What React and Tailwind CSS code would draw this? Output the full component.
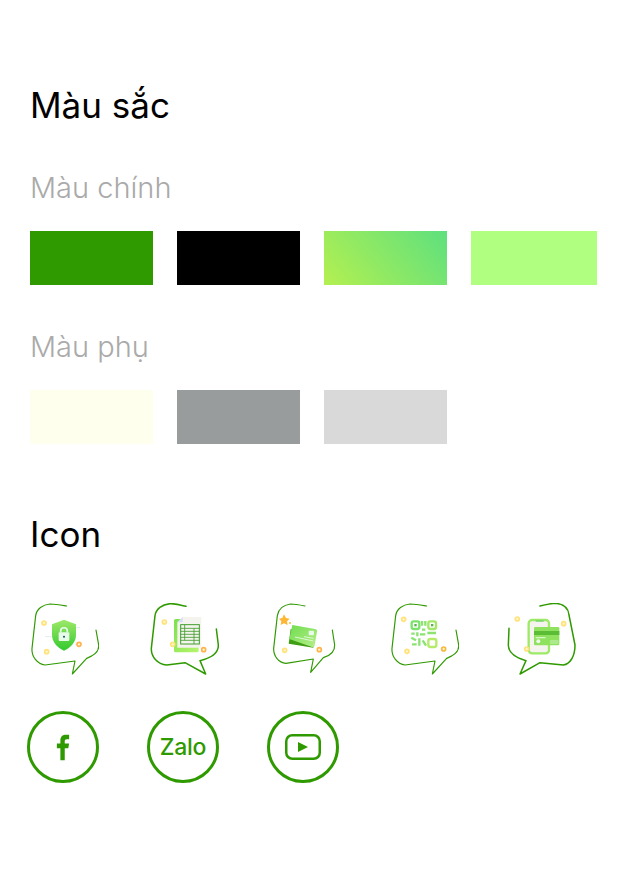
const font = { fontFamily: '"Inter", "Noto Sans", sans-serif' };

function Bubble({ d, box = "21 24 216 216", children, sw = 3.5 }) {
  return (
    <svg width="72" height="72" viewBox={box} fill="none" className="shrink-0">
      <path d={d} stroke="#2f9a00" strokeWidth={sw} strokeLinecap="round" strokeLinejoin="round" />
      {children}
    </svg>
  );
}

function Dot({ x, y, c = "#ffe27a", r = 6, w = 5 }) {
  return <circle cx={x} cy={y} r={r} fill="#fff6cf" stroke={c} strokeWidth={w} />;
}

function ShieldIcon() {
  return (
    <Bubble d="M140 33C122 30 105 27 90 27C68 29 50 42 47 62L36 160C34 185 52 207 75 210L165 198L157 237L200 190C222 182 238 170 236 150L228 105">
      <defs>
        <linearGradient id="sh" x1="0" y1="0" x2="0" y2="1">
          <stop offset="0" stopColor="#9fe86a" />
          <stop offset="1" stopColor="#33c92f" />
        </linearGradient>
      </defs>
      <path d="M162 98H180M75 125H95M165 148H172" stroke="#e6eaf5" strokeWidth="3" />
      <path d="M132 74L168 88V120C168 142 150 160 132 167C114 160 96 142 96 120V88Z" fill="url(#sh)" />
      <path d="M122 112V108C122 95 142 95 142 108V112" stroke="#e8fbe8" strokeWidth="5" />
      <rect x="116" y="112" width="32" height="26" rx="3" fill="#e8fbe8" />
      <circle cx="132" cy="125" r="3" fill="#174a6a" />
      <Dot x={72} y={84} />
      <Dot x={80} y={170} />
      <Dot x={177} y={148} c="#ffb24d" />
    </Bubble>
  );
}

function SheetIcon() {
  return (
    <Bubble sw={4.500} d="M138 34C120 30 105 25 90 26C66 28 48 42 45 62L34 160C33 185 52 208 80 210L135 203L197 237L180 197C210 190 236 175 235 150L229 102">
      <defs>
        <linearGradient id="sg" x1="0" y1="0" x2="1" y2="1">
          <stop offset="0" stopColor="#7ae04e" />
          <stop offset="1" stopColor="#b8f56e" />
        </linearGradient>
      </defs>
      <rect x="102" y="72" width="74" height="100" rx="5" fill="url(#sg)" />
      <path d="M128 66H184V158H112V82Z" fill="#f5f3ee" />
      <path d="M128 66V82H112Z" fill="#d5def5" />
      <rect x="122" y="89" width="56" height="58" fill="none" stroke="#3f9e2a" strokeWidth="3" />
      <path d="M122 100H178M122 109H178M122 118H178M122 127H178M122 136H178M134 89V136M162 100V147" stroke="#3f9e2a" strokeWidth="2.500" />
      <Dot x={73} y={81} />
      <Dot x={98} y={148} />
      <Dot x={191} y={164} c="#ffb24d" />
    </Bubble>
  );
}

function CardIcon() {
  return (
    <Bubble d="M135 33C120 30 105 27 92 27C70 30 55 42 52 62L41 160C40 182 55 204 78 205L160 192L152 232L190 188C210 182 225 172 224 150L217 105">
      <defs>
        <linearGradient id="cg" x1="0" y1="0" x2="1" y2="1">
          <stop offset="0" stopColor="#6fdc4e" />
          <stop offset="1" stopColor="#b6ef8a" />
        </linearGradient>
      </defs>
      <path d="M92 102L166 118L160 158L86 146Z" fill="#3f9e14" />
      <path d="M97 90L165 102C170 103 172 106 171 110L164 150C163 155 160 157 156 156L88 132Z" fill="url(#cg)" />
      <rect x="146" y="107" width="16" height="14" rx="3" fill="#e8fbe8" />
      <path d="M132 125L160 130M105 126L160 138" stroke="#e8fbe8" strokeWidth="2.500" />
      <path d="M72 58L78 69L89 71L81 79L83 90L72 85L62 90L64 79L57 71L67 69Z" fill="#ffb733" />
      <circle cx="90" cy="84" r="3" fill="#ffb733" />
      <Dot x={74} y={166} />
      <Dot x={178} y={164} c="#ffb24d" />
    </Bubble>
  );
}

function QrIcon() {
  return (
    <Bubble d="M140 33C122 30 105 27 90 27C68 29 50 42 47 62L36 160C34 185 52 207 75 210L165 198L157 237L200 190C222 182 238 170 236 150L228 105">
      <rect x="95" y="79" width="23" height="23" rx="6" stroke="#7be36a" strokeWidth="7" />
      <rect x="145" y="79" width="23" height="23" rx="6" stroke="#a4e86a" strokeWidth="7" />
      <rect x="145" y="132" width="24" height="24" rx="6" stroke="#b4ec6a" strokeWidth="7" />
      <rect x="103" y="87" width="7" height="7" fill="#5bb04a" />
      <rect x="153" y="87" width="7" height="7" fill="#5bb04a" />
      <path d="M126 78V92M136 78V92M126 104H136M94 116H104M112 112V124M94 128L108 136M120 118H136M142 114H168M96 148H110M118 130V152M128 136L138 152" stroke="#8be372" strokeWidth="7" />
      <Dot x={71} y={73} />
      <Dot x={81} y={169} />
      <Dot x={191} y={162} c="#f5b83a" />
    </Bubble>
  );
}

function PhoneIcon() {
  return (
    <Bubble sw={4.500} box="36 24 216 216" d="M135 33C155 28 170 25 182 25C205 27 220 38 222 60L240 150C240 185 225 207 205 210L135 203L75 237L93 197C62 188 40 175 40 150L42 100">
      <rect x="101" y="75" width="61" height="100" rx="10" fill="#f5f3ee" stroke="#9dea66" strokeWidth="7" />
      <path d="M122 78H146" stroke="#6fd36a" strokeWidth="4" />
      <rect x="117" y="96" width="76" height="55" rx="4" fill="#8ee25e" />
      <rect x="117" y="108" width="76" height="12" fill="#5bbd36" />
      <rect x="122" y="126" width="30" height="4" fill="#d8f7c6" />
      <circle cx="130" cy="139" r="6" fill="#e8fbe8" />
      <path d="M165 138H190M165 144H190" stroke="#e8fbe8" strokeWidth="2" />
      <Dot x={67} y={72} />
      <Dot x={206} y={86} />
      <Dot x={95} y={162} />
    </Bubble>
  );
}

function Circle({ children }) {
  return (
    <div className="w-[72px] h-[72px] shrink-0 rounded-full border-[3px] border-[#2f9a00] flex items-center justify-center text-[#2f9a00]">
      {children}
    </div>
  );
}

function Swatch({ className }) {
  return <div className={`h-[54px] ${className}`} />;
}

export default function App() {
  return (
    <div style={font} className="w-[636px] h-[879px] bg-white pl-[30px] pt-[84px]">
      <h2 className="text-[35px] leading-[42px] text-black">Màu sắc</h2>
      <h3 className="mt-[42px] text-[29px] font-light leading-[40px] text-[#aaaaaa]">Màu chính</h3>
      <div className="mt-[23px] flex gap-[24px]">
        <Swatch className="w-[123px] bg-[#2f9a00]" />
        <Swatch className="w-[123px] bg-black" />
        <Swatch className="w-[123px] bg-[linear-gradient(50deg,#b4f050_0%,#5ee07e_100%)]" />
        <Swatch className="w-[126px] bg-[#b1ff80]" />
      </div>
      <h3 className="mt-[42px] text-[29px] font-light leading-[40px] text-[#aaaaaa]">Màu phụ</h3>
      <div className="mt-[23px] flex gap-[24px]">
        <Swatch className="w-[123px] bg-[#ffffee]" />
        <Swatch className="w-[123px] bg-[#999c9d]" />
        <Swatch className="w-[123px] bg-[#d9d9d9]" />
      </div>
      <h2 className="mt-[69px] text-[35px] leading-[42px] text-black">Icon</h2>
      <div className="mt-[48px] -ml-[3px] flex gap-[48px]">
        <ShieldIcon />
        <SheetIcon />
        <CardIcon />
        <QrIcon />
        <PhoneIcon />
      </div>
      <div className="mt-[36px] -ml-[3px] flex gap-[48px]">
        <Circle>
          <svg width="14" height="28" viewBox="0 0 16 30" fill="currentColor">
            <path d="M5 30V16.500H1V11H5V7.500C5 3 7.500 1 11.500 1H15V6H12.500C10.500 6 10 7 10 8.500V11H15L14 16.500H10V30Z" />
          </svg>
        </Circle>
        <Circle>
          <span className="text-[23px] font-medium leading-none tracking-[-0.3px]">Zalo</span>
        </Circle>
        <Circle>
          <svg width="36" height="26" viewBox="0 0 36 26" fill="none">
            <rect x="1.250" y="1.250" width="33.500" height="23.500" rx="6" stroke="currentColor" strokeWidth="2.500" />
            <path d="M13 8L23 13L13 18Z" fill="currentColor" />
          </svg>
        </Circle>
      </div>
    </div>
  );
}
